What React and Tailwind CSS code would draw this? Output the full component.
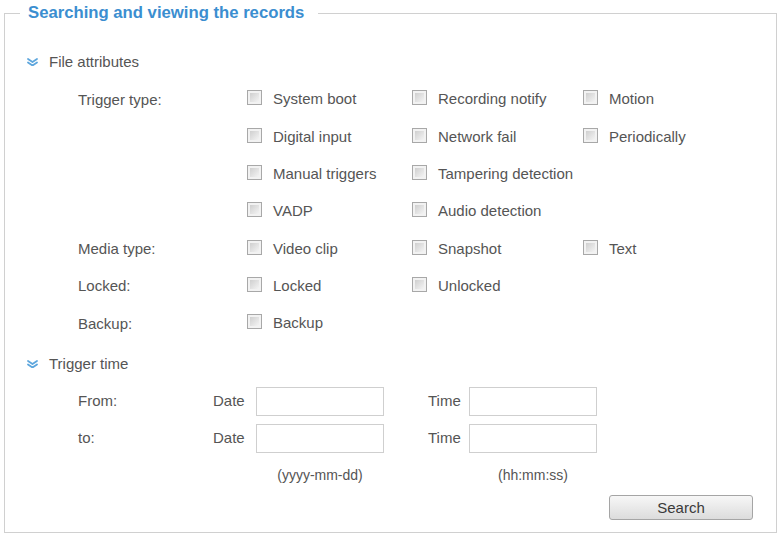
import React from "react";

const font = { fontFamily: '"Liberation Sans", Arial, sans-serif' };

function Chevron() {
  return (
    <svg width="11" height="8" viewBox="0 0 11 8" className="shrink-0">
      <path d="M1 1 L5.5 4 L10 1" fill="none" stroke="#5da6dd" strokeWidth="1.8" strokeLinecap="round" strokeLinejoin="round" />
      <path d="M1 4.5 L5.5 7.5 L10 4.5" fill="none" stroke="#5da6dd" strokeWidth="1.8" strokeLinecap="round" strokeLinejoin="round" />
    </svg>
  );
}

function Box() {
  return (
    <span className="w-[15px] h-[15px] border border-[#a8a8a8] bg-[#f2f2f2] p-[2px] shrink-0 flex">
      <span className="flex-1 bg-gradient-to-br from-[#cfcfcf] to-[#f4f4f4]" />
    </span>
  );
}

function Check({ label }) {
  return (
    <div className="flex items-center gap-[11px]">
      <Box />
      <span className="mt-[3px]">{label}</span>
    </div>
  );
}

function Row({ label, items }) {
  return (
    <div className="h-[37.33px] grid grid-cols-[169px_165px_171px_1fr] items-center pl-[73px]">
      <span className="mt-[4px]">{label}</span>
      {[0, 1, 2].map((i) => (
        <div key={i}>{items[i] ? <Check label={items[i]} /> : null}</div>
      ))}
    </div>
  );
}

function Section({ title }) {
  return (
    <div className="h-[24px] flex items-center pl-[22px] gap-[11px]">
      <Chevron />
      <span>{title}</span>
    </div>
  );
}

function TimeRow({ label }) {
  return (
    <div className="h-[29px] grid grid-cols-[135px_43px_128px_44px_41px_128px] items-center pl-[73px]">
      <span>{label}</span>
      <span>Date</span>
      <div className="h-[29px] border border-[#cfcfcf] bg-white" />
      <span />
      <span>Time</span>
      <div className="h-[29px] border border-[#cfcfcf] bg-white" />
    </div>
  );
}

export default function App() {
  return (
    <div className="w-[781px] h-[537px] bg-white text-[15px] text-[#555555] overflow-hidden" style={font}>
      <fieldset className="mt-[4px] ml-[4px] w-[773px] h-[529px] border border-[#d0d0d0]">
        <legend className="ml-[15px] pl-[8px] pr-[14px] h-[18px] leading-[18px] text-[16.7px] font-bold text-[#3b8ed0]">
          Searching and viewing the records
        </legend>
        <div className="flex flex-col">
          <div className="h-[28px]" />
          <Section title="File attributes" />
          <div className="h-[5.33px]" />
          <Row label="Trigger type:" items={["System boot", "Recording notify", "Motion"]} />
          <Row label="" items={["Digital input", "Network fail", "Periodically"]} />
          <Row label="" items={["Manual triggers", "Tampering detection"]} />
          <Row label="" items={["VADP", "Audio detection"]} />
          <Row label="Media type:" items={["Video clip", "Snapshot", "Text"]} />
          <Row label="Locked:" items={["Locked", "Unlocked"]} />
          <Row label="Backup:" items={["Backup"]} />
          <div className="h-[11.33px]" />
          <Section title="Trigger time" />
          <div className="h-[11px]" />
          <TimeRow label="From:" />
          <div className="h-[8px]" />
          <TimeRow label="to:" />
          <div className="h-[12px] shrink-0" />
          <div className="h-[20px] grid grid-cols-[178px_128px_85px_128px] items-center pl-[73px] text-[14px]">
            <span />
            <span className="text-center">(yyyy-mm-dd)</span>
            <span />
            <span className="text-center">(hh:mm:ss)</span>
          </div>
          <div className="h-[10px]" />
          <div className="flex pl-[604px]">
            <button className="w-[144px] h-[25px] border border-[#a5a5a5] rounded-[3px] bg-gradient-to-b from-[#f7f7f7] to-[#dcdcdc] text-[15px] text-[#3a3a3a] leading-[23px]" style={font}>
              Search
            </button>
          </div>
        </div>
      </fieldset>
    </div>
  );
}
